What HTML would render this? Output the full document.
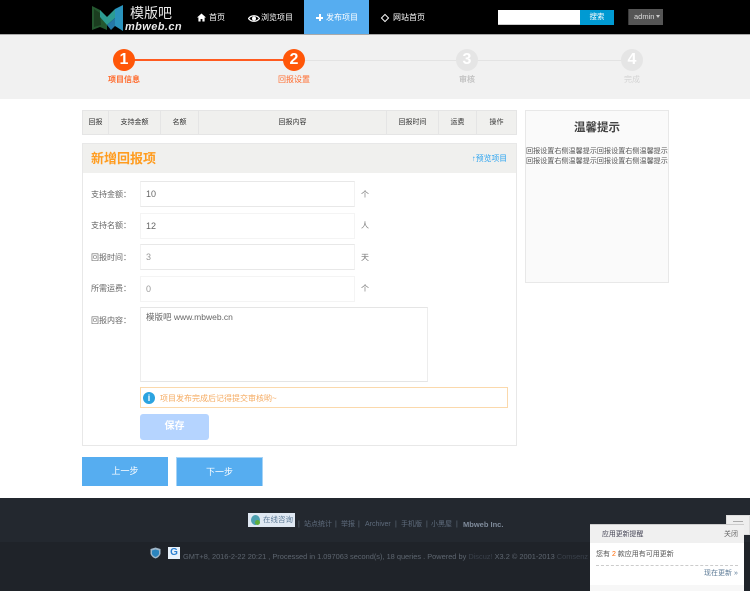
<!DOCTYPE html>
<html><head><meta charset="utf-8">
<style>
html,body{margin:0;padding:0;background:#fff}
body{position:relative;width:750px;height:591px;overflow:hidden;font-family:"Liberation Sans","Noto Sans CJK SC",sans-serif;font-size:8px;color:#555}
.a{position:absolute;box-sizing:border-box;white-space:nowrap}
.c{text-align:center}
.nav{color:#fff;font-size:8px;top:12px;line-height:11px}
.circ{width:22px;height:22px;border-radius:50%;top:49px;font:bold 16px/22px "Liberation Sans",sans-serif;color:#fff;text-align:center}
.th{top:111px;height:23px;line-height:23px;font-size:7px;color:#333;text-align:center;border-right:1px solid #e5e5e5}
.inp{left:140px;width:215px;height:26px;background:#fff;border:1px solid #f2f2f2;border-top-color:#e8e8e8;border-bottom-color:#e8e8e8;font-size:9px;line-height:24px;padding-left:5px;color:#666}
.lb{left:91px;font-size:8px;color:#666;line-height:12px}
.un{left:361px;font-size:8px;color:#777;line-height:12px}
.ft{top:519px;font-size:7px;color:#5f6c7d;line-height:11px}
</style></head><body>

<div class="a" style="left:0;top:0;width:750px;height:35px;background:#000;border-bottom:1px solid #a9a9a9"></div>
<svg class="a" style="left:91px;top:4px" width="33" height="27" viewBox="0 0 33 27"><path d="M1 2 9 6 16 13 16 26 9 23 1 26Z" fill="#24572f"/><path d="M3 5 9 9 10 21 3 23Z" fill="#1b3d20"/><path d="M9 6 16 13 24 5 24 14 16 21 9 13Z" fill="#2c9c93"/><path d="M24 5 32 1 32 27 24 22Z" fill="#2a93bd"/><path d="M16 21 24 14 24 22 20 26Z" fill="#2578a8"/></svg>
<div class="a" style="left:130px;top:4px;color:#e8e8e8;font-size:14px;line-height:18px">模版吧</div>
<div class="a" style="left:125px;top:21px;color:#e8e8e8;font:italic bold 11px/12px 'Liberation Sans',sans-serif;letter-spacing:.4px">mbweb.cn</div>

<svg class="a" style="left:197px;top:13px" width="9" height="9" viewBox="0 0 9 9"><path d="M4.500 .5 9 4.500H7.600V8.500H5.400V6H3.600V8.500H1.400V4.500H0Z" fill="#fff"/></svg>
<div class="a nav" style="left:209px">首页</div>
<svg class="a" style="left:248px;top:14px" width="12" height="9" viewBox="0 0 12 9"><path d="M.5 4.500C3 .8 9 .8 11.500 4.500 9 8.200 3 8.200 .5 4.500Z" fill="none" stroke="#fff" stroke-width="1.200"/><circle cx="6" cy="4.500" r="2" fill="#fff"/></svg>
<div class="a nav" style="left:261px">浏览项目</div>
<div class="a" style="left:304px;top:0;width:65px;height:34px;background:#56adf0"></div>
<div class="a" style="left:316px;top:17px;width:7px;height:1.500px;background:#fff"></div>
<div class="a" style="left:319px;top:14px;width:1.500px;height:7px;background:#fff"></div>
<div class="a nav" style="left:326px">发布项目</div>
<div class="a" style="left:382px;top:15px;width:6px;height:6px;border:1px solid #fff;transform:rotate(45deg)"></div>
<div class="a nav" style="left:393px">网站首页</div>

<div class="a" style="left:498px;top:10px;width:82px;height:15px;background:#fff;border-bottom:1px solid #ccc"></div>
<div class="a c" style="left:580px;top:10px;width:34px;height:15px;background:#009ad2;color:#fff;font-size:7.500px;line-height:14px">搜索</div>
<div class="a" style="left:628px;top:9px;width:35px;height:16px;background:#555;border-left:1px solid #3a3a3a;color:#ddd;font:7.500px/15px 'Liberation Sans',sans-serif;padding-left:5px">admin<span style="display:inline-block;border:2px solid transparent;border-top:3px solid #ccc;border-bottom:0;margin-left:2px;vertical-align:1px"></span></div>

<div class="a" style="left:0;top:35px;width:750px;height:64px;background:#f1f1f1"></div>
<div class="a" style="left:124px;top:59px;width:170px;height:2px;background:#ff5a1f"></div>
<div class="a" style="left:294px;top:60px;width:338px;height:1px;background:#e3e3e3"></div>
<div class="a circ" style="left:113px;background:#ff5608">1</div>
<div class="a circ" style="left:283px;background:#ff5608">2</div>
<div class="a circ" style="left:456px;background:#e5e5e5">3</div>
<div class="a circ" style="left:621px;background:#e5e5e5">4</div>
<div class="a c" style="left:94px;top:74px;width:60px;color:#ff6a2c;font-size:8px;font-weight:bold;line-height:12px">项目信息</div>
<div class="a c" style="left:264px;top:74px;width:60px;color:#ff6a2c;font-size:8px;line-height:12px">回报设置</div>
<div class="a c" style="left:437px;top:74px;width:60px;color:#c4c4c4;font-size:8px;font-weight:bold;line-height:12px">审核</div>
<div class="a c" style="left:602px;top:74px;width:60px;color:#d4d4d4;font-size:8px;line-height:12px">完成</div>

<div class="a" style="left:82px;top:110px;width:435px;height:25px;background:#f0f0ee;border:1px solid #e5e5e5"></div>
<div class="a th" style="left:83px;width:26px">回报</div>
<div class="a th" style="left:109px;width:52px">支持金额</div>
<div class="a th" style="left:161px;width:38px">名额</div>
<div class="a th" style="left:199px;width:188px">回报内容</div>
<div class="a th" style="left:387px;width:52px">回报时间</div>
<div class="a th" style="left:439px;width:38px">运费</div>
<div class="a th" style="left:477px;width:39px;border:0">操作</div>

<div class="a" style="left:525px;top:110px;width:144px;height:173px;background:#fafafa;border:1px solid #e8e8e8"></div>
<div class="a c" style="left:525px;top:120px;width:144px;font-size:11.500px;font-weight:bold;line-height:16px;color:#444">温馨提示</div>
<div class="a" style="left:526px;top:146px;font-size:7.100px;line-height:10px;color:#555">回报设置右侧温馨提示回报设置右侧温馨提示<br>回报设置右侧温馨提示回报设置右侧温馨提示</div>

<div class="a" style="left:82px;top:143px;width:435px;height:303px;background:#fff;border:1px solid #e8e8e8"></div>
<div class="a" style="left:83px;top:144px;width:433px;height:29px;background:#f0f0ee"></div>
<div class="a" style="left:91px;top:150px;color:#ff9c1f;font-size:13px;font-weight:bold;line-height:18px">新增回报项</div>
<div class="a" style="left:472px;top:153px;color:#2ba3f0;font-size:7.800px;line-height:11px">↑预览项目</div>

<div class="a lb" style="left:91px;top:189px">支持金额：</div>
<div class="a inp" style="top:181px">10</div><div class="a un" style="top:189px">个</div>
<div class="a lb" style="top:220px">支持名额：</div>
<div class="a inp" style="top:213px;border-color:#f4f4f4">12</div><div class="a un" style="top:220px">人</div>
<div class="a lb" style="top:252px">回报时间：</div>
<div class="a inp" style="top:244px;color:#999">3</div><div class="a un" style="top:252px">天</div>
<div class="a lb" style="top:283px">所需运费：</div>
<div class="a inp" style="top:276px;border-color:#f4f4f4;color:#999">0</div><div class="a un" style="top:283px">个</div>
<div class="a lb" style="top:315px">回报内容：</div>
<div class="a" style="left:140px;top:307px;width:288px;height:75px;border:1px solid #ededed;border-top-color:#e5e5e5;border-bottom:1px solid #e5e5e5;font-size:8.500px;line-height:18px;padding-left:5px;color:#666;background:#fff">模版吧 www.mbweb.cn</div>

<div class="a" style="left:140px;top:387px;width:368px;height:21px;border:1px solid #fbd9ac"></div>
<div class="a c" style="left:143px;top:392px;width:12px;height:12px;border-radius:50%;background:#2ba3e0;color:#fff;font:bold 9px/12px 'Liberation Sans',sans-serif">i</div>
<div class="a" style="left:160px;top:393px;color:#f5ab62;font-size:8px;line-height:11px">项目发布完成后记得提交审核哟~</div>
<div class="a c" style="left:140px;top:414px;width:69px;height:26px;background:#b5d4ff;border-radius:3px;color:#fff;font-size:10px;font-weight:bold;line-height:26px">保存</div>

<div class="a c" style="left:82px;top:457px;width:86px;height:29px;background:#56adf0;color:#fff;font-size:9px;line-height:29px">上一步</div>
<div class="a c" style="left:176px;top:457px;width:87px;height:29px;background:#56adf0;color:#fff;font-size:9px;line-height:29px;border-left:1px solid #a5d3f6;border-right:1px solid #a5d3f6;border-top:1px solid #a5d3f6">下一步</div>

<div class="a" style="left:0;top:498px;width:750px;height:44px;background:#23282f"></div>
<div class="a" style="left:0;top:542px;width:750px;height:49px;background:#1f2329"></div>
<div class="a" style="left:248px;top:513px;width:47px;height:14px;background:#dfe8f2;color:#5c7a96;font-size:7.500px;line-height:14px;padding-left:15px">在线咨询</div>
<div class="a" style="left:251px;top:515px;width:9px;height:10px;border-radius:50%;background:#4da0b0"></div>
<div class="a" style="left:255px;top:520px;width:5px;height:5px;border-radius:50%;background:#5fae3c"></div>
<div class="a ft" style="left:298px">|</div>
<div class="a ft" style="left:304px">站点统计</div>
<div class="a ft" style="left:335px">|</div>
<div class="a ft" style="left:341px">举报</div>
<div class="a ft" style="left:358px">|</div>
<div class="a ft" style="left:365px">Archiver</div>
<div class="a ft" style="left:395px">|</div>
<div class="a ft" style="left:401px">手机版</div>
<div class="a ft" style="left:426px">|</div>
<div class="a ft" style="left:431px">小黑屋</div>
<div class="a ft" style="left:456px">|</div>
<div class="a ft" style="left:463px;color:#7f8b9b;font-weight:bold;font-size:7.500px">Mbweb Inc.</div>

<svg class="a" style="left:150px;top:547px" width="11" height="12" viewBox="0 0 11 12"><path d="M5.500 .5 10.500 2V7Q9 10.500 5.500 11.500 2 10.500 .5 7V2Z" fill="#9fb6c8"/><path d="M5.500 2.500 9 3.500V7Q8 9 5.500 10 3 9 2 7V3.500Z" fill="#2b84bd"/></svg>
<div class="a c" style="left:168px;top:547px;width:12px;height:12px;background:#e8f1fa;color:#2a7fd0;font:bold 10px/12px 'Liberation Sans',sans-serif">G</div>
<div class="a" style="left:183px;top:551px;color:#5e6670;font-size:7.400px;line-height:11px">GMT+8, 2016-2-22 20:21 , Processed in 1.097063 second(s), 18 queries . Powered by <span style="color:#3a414b">Discuz!</span> X3.2 © 2001-2013 <span style="color:#3a414b">Comsenz Inc.</span></div>

<div class="a" style="left:726px;top:515px;width:24px;height:20px;background:#eee;border:1px solid #ddd"></div>
<div class="a" style="left:733px;top:521px;width:10px;height:1px;background:#aaa"></div>
<div class="a" style="left:590px;top:524px;width:154px;height:67px;background:#fff;border-top:1px solid #ccc"></div>
<div class="a" style="left:590px;top:525px;width:154px;height:18px;background:#f0f0f0"></div>
<div class="a" style="left:602px;top:529px;color:#445;font-size:6.900px;line-height:11px">应用更新提醒</div>
<div class="a" style="left:724px;top:529px;color:#666;font-size:7px;line-height:11px">关闭</div>
<div class="a" style="left:596px;top:549px;color:#555;font-size:7px;line-height:11px">您有 <span style="color:#f60">2</span> 款应用有可用更新</div>
<div class="a" style="left:596px;top:565px;width:142px;border-top:1px dashed #ccc"></div>
<div class="a" style="left:704px;top:568px;color:#5c7a96;font-size:7px;line-height:11px">现在更新 »</div>
<div class="a" style="left:590px;top:585px;width:154px;height:6px;background:#f7f7f7"></div>
</body></html>
